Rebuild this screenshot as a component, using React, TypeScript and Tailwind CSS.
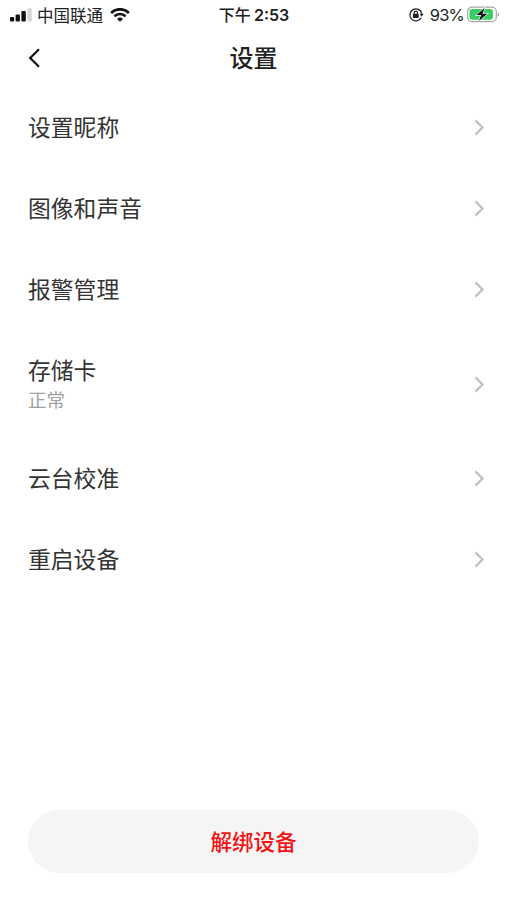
const items = [
  { title: "设置昵称" },
  { title: "图像和声音" },
  { title: "报警管理" },
  { title: "存储卡", note: "正常" },
  { title: "云台校准" },
  { title: "重启设备" },
];

function SignalIcon() {
  return (
    <svg width="22" height="15" viewBox="0 0 22 15" fill="#111">
      <rect x="0" y="9" width="4.2" height="4.6" rx="1" />
      <rect x="5.6" y="6.6" width="4.3" height="7" rx="1" />
      <rect x="11.4" y="3" width="4.4" height="10.6" rx="1" />
      <rect x="17.5" y="0.3" width="4.3" height="13.3" rx="1" fill="#d8d8d8" />
    </svg>
  );
}

function WifiIcon() {
  return (
    <svg width="20" height="15" viewBox="0 0 20 15" fill="none" stroke="#111">
      <path d="M1.1 4.9a12.8 12.8 0 0 1 17.8 0" strokeWidth="2.8" />
      <path d="M4.4 8.4a8 8 0 0 1 11.2 0" strokeWidth="2.5" />
      <path d="M10 13.8 7 11a4.4 4.4 0 0 1 6 0Z" fill="#111" stroke="none" />
    </svg>
  );
}

function RotationLockIcon() {
  return (
    <svg width="16" height="16" viewBox="0 0 16 16" fill="none" stroke="#222">
      <path d="M13.2 10.8A6 6 0 1 1 13.8 6.6" strokeWidth="1.3" />
      <path d="M11.6 6.8h4l-2 3Z" fill="#222" stroke="none" />
      <rect x="4.9" y="6.8" width="5.8" height="4.2" rx="0.7" fill="#222" stroke="none" />
      <path d="M6.2 7.1V5.8a1.6 1.6 0 0 1 3.2 0v1.3" strokeWidth="1.2" />
    </svg>
  );
}

function BatteryIcon() {
  return (
    <svg width="33" height="18" viewBox="0 0 33 18">
      <rect x="0.7" y="1.2" width="28.6" height="14.4" rx="4.3" fill="#fff" stroke="#a8a8a8" strokeWidth="1.2" />
      <rect x="2.5" y="3" width="23.4" height="10.8" rx="2.8" fill="#35cf61" />
      <path d="M30.7 6c1.8.6 1.8 4.2 0 4.8Z" fill="#a8a8a8" />
      <path
        d="M17.4 1.9 9.5 9.1h4.6l-2.2 5.9 8.4-7.3h-4.8Z"
        fill="#111"
        stroke="#fff"
        strokeWidth="1.2"
        paintOrder="stroke"
      />
    </svg>
  );
}

function RowArrow() {
  return (
    <svg width="12" height="18" viewBox="0 0 12 18" fill="none" stroke="#c0c0c0" strokeWidth="2.3">
      <path d="m1.5 1.4 7 7.1-7 7.1" />
    </svg>
  );
}

export default function App() {
  return (
    <div className="flex h-[900px] w-[507px] flex-col bg-white font-['Inter','Noto_Sans_CJK_SC',sans-serif] text-[#333]">
      <header>
        <div className="grid h-[30px] grid-cols-[1fr_auto_1fr] items-center pr-[7px] pl-[10px] text-[#222]">
          <div className="flex items-center">
            <SignalIcon />
            <span className="ml-[5px] pt-[2px] text-[16.5px] leading-[28px]">中国联通</span>
            <span className="ml-[7px]">
              <WifiIcon />
            </span>
          </div>
          <span className="-ml-[2px] text-[16px] leading-[30px] font-medium whitespace-pre">
            下午 <span className="-ml-px font-semibold">2:53</span>
          </span>
          <div className="flex items-center justify-end">
            <RotationLockIcon />
            <span className="mr-[3px] ml-[6px] text-[16.5px] leading-[30px] tracking-[-0.8px]">93%</span>
            <BatteryIcon />
          </div>
        </div>
        <div className="grid h-[58px] grid-cols-[1fr_auto_1fr] items-start px-[28px]">
          <button className="flex h-[55px] items-center" aria-label="返回">
            <svg width="13" height="20" viewBox="0 0 13 20" fill="none" stroke="#111" strokeWidth="2.2">
              <path d="M11 1.2 2.2 10l8.8 8.8" />
            </svg>
          </button>
          <h1 className="text-[24px] leading-[57px] font-medium text-[#222]">设置</h1>
        </div>
      </header>

      <ul>
        {items.map((item) => (
          <li
            key={item.title}
            className="flex items-center justify-between pt-[23px] pr-[21px] pb-[24px] pl-[28px]"
          >
            <div>
              <p className="text-[22.8px] leading-[34px]">{item.title}</p>
              {item.note && (
                <p className="pb-[2px] text-[18.5px] leading-[25px] text-[#a0a0a0]">{item.note}</p>
              )}
            </div>
            <RowArrow />
          </li>
        ))}
      </ul>

      <button className="mx-[28px] mt-auto mb-[27px] h-[63px] rounded-full bg-[#f5f5f5] pt-[2px] text-[21.5px] font-medium text-[#f51212]">
        解绑设备
      </button>
    </div>
  );
}
